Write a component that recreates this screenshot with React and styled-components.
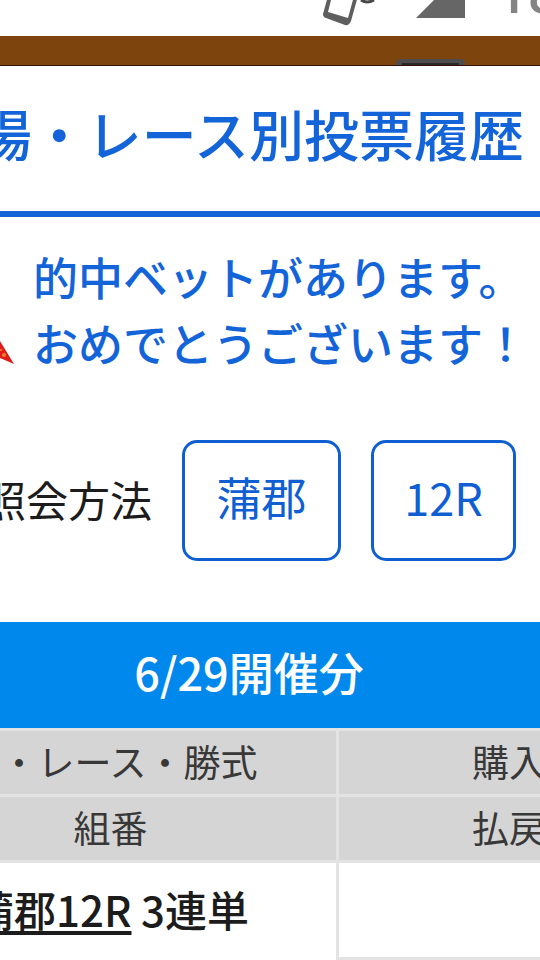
import React from 'react'
import styled, { createGlobalStyle } from 'styled-components'

export default function App() {
  return (
    <>
      <GlobalStyle />
      <Page>
        <StatusBar>
          <PhoneIcon />
          <SignalIcon />
          <Clock>18</Clock>
        </StatusBar>
        <BrandBar>
          <Tab />
        </BrandBar>
        <Header>
          <h1>場・レース別投票履歴</h1>
        </Header>
        <Message>
          <PopperIcon />
          <p>
            的中ベットがあります。
            <br />
            おめでとうございます！
          </p>
        </Message>
        <Filter role="group" aria-labelledby="method">
          <span id="method">照会方法</span>
          <FilterButton type="button" $width="159px">蒲郡</FilterButton>
          <FilterButton type="button" $width="145px">12R</FilterButton>
        </Filter>
        <DateBand>6/29開催分</DateBand>
        <Bets>
          <colgroup>
            <col className="race" />
            <col />
          </colgroup>
          <thead>
            <tr>
              <th>場・レース・勝式</th>
              <th>購入金額</th>
            </tr>
            <tr>
              <th>組番</th>
              <th>払戻金額</th>
            </tr>
          </thead>
          <tbody>
            <tr>
              <td rowSpan="2">
                <a href="#race">蒲郡12R</a> 3連単
              </td>
              <td></td>
            </tr>
            <tr>
              <td></td>
            </tr>
          </tbody>
        </Bets>
      </Page>
    </>
  )
}

function PhoneIcon() {
  return (
    <svg width="62" height="36" viewBox="322 0 62 36" aria-hidden="true">
      <path d="M328 -4 L323 14 Q323 17 326 18 L345 25 Q349 26 351 21 L358 -4 Z" fill="#5e5e5e" />
      <path d="M332 -4 L328 12 L348 18 L354 -4 Z" fill="#fff" />
      <path d="M361 0 Q367 4 374 0" fill="none" stroke="#484848" strokeWidth="3" />
    </svg>
  )
}

function SignalIcon() {
  return (
    <svg width="49" height="36" viewBox="0 0 49 36" aria-hidden="true">
      <path d="M0 18 L18 0 H49 V18 Z" fill="#666" />
    </svg>
  )
}

function PopperIcon() {
  return (
    <svg width="14" height="30" viewBox="0 0 14 30" aria-hidden="true">
      <path d="M0 5 L14 28 L0 22 Z" fill="#df1c1c" />
      <circle cx="4" cy="19" r="2" fill="#f1802c" />
      <circle cx="1" cy="14" r="1" fill="#f18a2c" />
    </svg>
  )
}

// styled components

const GlobalStyle = createGlobalStyle`
  * {
    box-sizing: border-box;
  }
  body {
    margin: 0;
    background-color: #fff;
    color: #1c1c1c;
    font-family: 'Noto Sans CJK JP', sans-serif;
  }
  h1, p {
    margin: 0;
  }
`

const Page = styled.main`
  height: 100vh;
  overflow: hidden;
`

const StatusBar = styled.div`
  display: flex;
  justify-content: flex-end;
  height: 36px;
  gap: 32px;
  overflow: hidden;
  svg{
    flex: none;
  }
`

const Clock = styled.span`
  display: flex;
  align-items: flex-end;
  width: 43px;
  height: 27px;
  font-family: Roboto, sans-serif;
  font-size: 54px;
  font-weight: 500;
  line-height: 64px;
  color: #848484;
`

const BrandBar = styled.div`
  display: flex;
  align-items: flex-end;
  justify-content: flex-end;
  height: 30px;
  padding-right: 75px;
  background-color: #7d450d;
  border-bottom: 1px solid #351008;
`

const Tab = styled.div`
  width: 69px;
  height: 6px;
  background-color: #292929;
  border: 6px solid #4d4d4d;
  border-top-width: 4px;
  border-bottom: none;
  border-radius: 5px 5px 0 0;
`

const Header = styled.header`
  display: flex;
  align-items: center;
  justify-content: flex-end;
  height: 151px;
  padding: 0 16px 14px 0;
  border-bottom: 6px solid #1263d6;
  h1{
    flex: none;
    font-size: 55px;
    font-weight: 500;
    line-height: 80px;
    white-space: nowrap;
    color: #1464d9;
  }
`

const Message = styled.section`
  display: flex;
  align-items: flex-end;
  gap: 19px;
  padding: 27px 0 3px;
  svg{
    flex: none;
    margin-bottom: 10px;
  }
  p{
    font-size: 45px;
    font-weight: 500;
    line-height: 66px;
    white-space: nowrap;
    color: #1464d9;
  }
`

const Filter = styled.section`
  display: flex;
  align-items: center;
  justify-content: flex-end;
  gap: 30px;
  padding: 61px 24px 61px 0;
  span{
    flex: none;
    padding-bottom: 4px;
    font-size: 42px;
    line-height: 60px;
  }
`

const FilterButton = styled.button`
  flex: none;
  width: ${({ $width }) => $width};
  height: 121px;
  padding: 0 0 8px;
  border: 3px solid #0f5fd3;
  border-radius: 15px;
  background-color: #fff;
  font-family: inherit;
  font-size: 45px;
  color: #0f5fd3;
  cursor: pointer;
`

const DateBand = styled.h2`
  height: 106px;
  margin: 0;
  padding-right: 42px;
  background-color: #0088ec;
  font-size: 45px;
  font-weight: 500;
  line-height: 100px;
  text-align: center;
  color: #fff;
`

// wider than the screen on both sides, like the scrolled history table
const Bets = styled.table`
  width: calc(100% + 334px);
  margin-left: -118px;
  table-layout: fixed;
  border-collapse: collapse;
  .race{
    width: 454px;
  }
  th, td{
    padding: 0;
    border: 3px solid #e3e3e3;
    white-space: nowrap;
  }
  th{
    height: 66px;
    padding-bottom: 4px;
    background-color: #d5d5d5;
    font-size: 37px;
    font-weight: 400;
    line-height: 58px;
    color: #383838;
  }
  td{
    height: 97px;
    padding-top: 16px;
    font-size: 42px;
    font-weight: 500;
    line-height: 60px;
    text-align: center;
    vertical-align: top;
  }
  a{
    color: inherit;
    text-decoration-thickness: 4px;
    text-underline-offset: 4px;
    text-decoration-skip-ink: none;
  }
`
